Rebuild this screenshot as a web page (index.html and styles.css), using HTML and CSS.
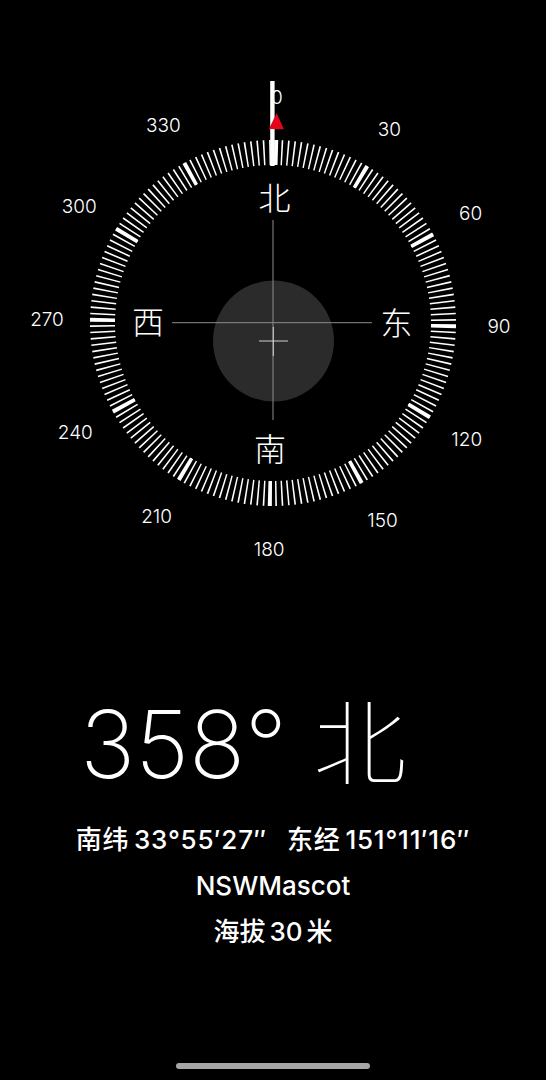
FILE: index.html
```html
<!DOCTYPE html>
<html lang="zh-CN">
<head>
<meta charset="utf-8">
<title>指南针</title>
<link rel="stylesheet" href="styles.css">
</head>
<body>
<main class="screen">
  <section class="compass">
    <svg class="dial" width="546" height="600" viewBox="0 0 546 600">
      <g class="ring" transform="rotate(1 273 323)">
        <circle class="ticks" cx="273" cy="323" r="170.5" pathLength="360"/>
        <circle class="ticks-major" cx="273" cy="323" r="170.5" pathLength="360"/>
      </g>
      <g class="degrees">
        <text x="276.9" y="103.5">0</text>
        <text x="389.4" y="135.8">30</text>
        <text x="470.7" y="219.9">60</text>
        <text x="499.0" y="333.4">90</text>
        <text x="466.7" y="445.9">120</text>
        <text x="382.6" y="527.2">150</text>
        <text x="269.1" y="555.5">180</text>
        <text x="156.6" y="523.2">210</text>
        <text x="75.3" y="439.1">240</text>
        <text x="47.0" y="325.6">270</text>
        <text x="79.3" y="213.1">300</text>
        <text x="163.4" y="131.8">330</text>
      </g>
      <rect class="needle" x="270.2" y="81" width="4.4" height="85"/>
      <polygon class="north-mark" transform="rotate(1 273 323)" points="273,113 265.5,129 280.5,129"/>
      <g class="cardinals">
        <text x="274.5" y="209.5">北</text>
        <text x="396.5" y="334.5">东</text>
        <text x="270" y="461">南</text>
        <text x="148" y="334">西</text>
      </g>
      <circle class="bubble" cx="273.5" cy="341" r="60.5"/>
      <g class="crosshair">
        <line x1="172" y1="322.7" x2="372" y2="322.7"/>
        <line x1="273" y1="220" x2="273" y2="420"/>
      </g>
      <g class="level-cross">
        <line x1="259" y1="341" x2="288" y2="341"/>
        <line x1="273.3" y1="327" x2="273.3" y2="356"/>
      </g>
    </svg>
  </section>

  <section class="readout">
    <h1 class="heading">358° <span class="heading-dir">北</span></h1>
    <p class="info info-coords"><span>南纬 33°55′27″</span><span>东经 151°11′16″</span></p>
    <p class="info">NSWMascot</p>
    <p class="info">海拔 30 米</p>
  </section>

  <div class="home-indicator"></div>
</main>
</body>
</html>
```

FILE: styles.css
```css
html, body {
  margin: 0;
  padding: 0;
  background: #000;
}

.screen {
  width: 546px;
  height: 1080px;
  display: flex;
  flex-direction: column;
  background: #000;
  color: #fff;
  font-family: "Inter", "Noto Sans CJK SC", sans-serif;
  overflow: hidden;
}

.compass {
  height: 600px;
  flex: none;
}

.dial {
  display: block;
}

.ticks {
  fill: none;
  stroke: #fff;
  stroke-width: 25;
  stroke-dasharray: 0.52 1.48;
  stroke-dashoffset: 0.26;
}

.ticks-major {
  fill: none;
  stroke: #fff;
  stroke-width: 25;
  stroke-dasharray: 1.3 28.7;
  stroke-dashoffset: 0.65;
}

.north-mark {
  fill: #e3061b;
}

.degrees text {
  fill: #fff;
  font-family: "Inter", sans-serif;
  font-size: 19px;
  font-weight: 300;
  text-anchor: middle;
}

.needle {
  fill: #fff;
}

.cardinals text {
  fill: #fff;
  font-family: "Noto Sans CJK SC", sans-serif;
  font-size: 32px;
  font-weight: 300;
  text-anchor: middle;
}

.bubble {
  fill: #2b2b2b;
}

.crosshair line {
  stroke: #8c8c8c;
  stroke-width: 1;
}

.level-cross line {
  stroke: #cfcfcf;
  stroke-width: 1;
}

.readout {
  display: flex;
  flex-direction: column;
  align-items: center;
}

.heading {
  align-self: flex-start;
  margin: 91px 0 0 0;
  padding-left: 80px;
  font-family: "Inter", "Noto Sans CJK SC", sans-serif;
  font-size: 93px;
  font-weight: 200;
  line-height: 93px;
  white-space: nowrap;
}

.heading-dir {
  font-family: "Noto Sans CJK SC", sans-serif;
  font-weight: 100;
}

.info {
  margin: 0;
  font-size: 26px;
  font-weight: 500;
  line-height: 46px;
  white-space: nowrap;
  word-spacing: -3px;
}

.info-coords {
  display: flex;
  gap: 20px;
  letter-spacing: 0.8px;
}

.heading + .info {
  margin-top: 26px;
}

.home-indicator {
  flex: none;
  width: 194px;
  height: 6px;
  border-radius: 3px;
  background: #a6a6a6;
  margin: auto auto 11px auto;
}
```
